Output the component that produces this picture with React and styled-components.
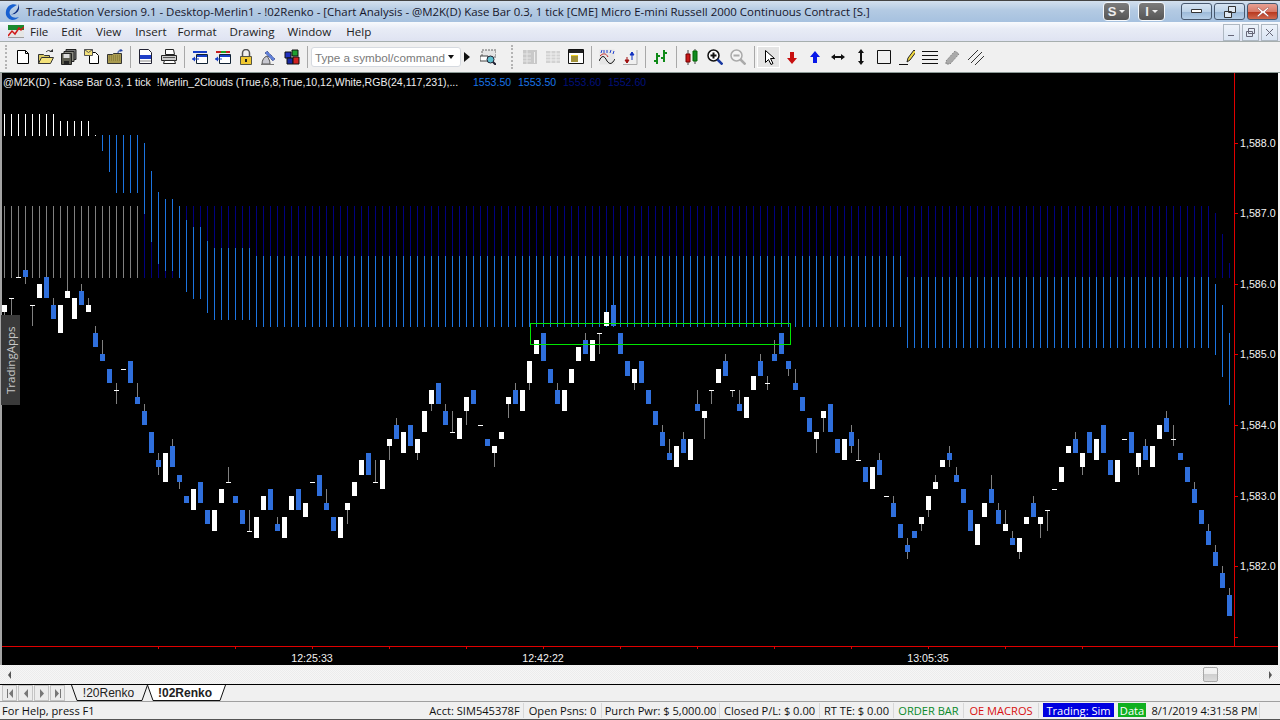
import React from "react";
import styled, { createGlobalStyle } from "styled-components";

const UI_FONT = `"Open Sans", "Noto Sans", "Liberation Sans", sans-serif`;
const CHART_FONT = `"Liberation Sans", Arial, sans-serif`;

const GlobalStyle = createGlobalStyle`
  html, body {
    margin: 0;
    padding: 0;
    overflow: hidden;
    background: #f0f0f0;
  }
`;

const Shell = styled.div`
  width: 1280px;
  height: 720px;
  display: flex;
  flex-direction: column;
  font-family: ${UI_FONT};
  color: #111;
  overflow: hidden;
`;

/* ---------- window chrome ---------- */

const TitleBar = styled.div`
  height: 22px;
  flex: none;
  display: flex;
  align-items: center;
  border-top: 1px solid #444;
  box-sizing: border-box;
  padding: 0 2px 0 4px;
  background: linear-gradient(#d3e0ee, #b3cae3 45%, #a6c1df);
`;

const TitleText = styled.div`
  margin-left: 5px;
  margin-right: auto;
  font-size: 11.45px;
  white-space: nowrap;
  color: #16162a;
`;

const AppBadge = styled.div`
  width: 27px;
  height: 19px;
  flex: none;
  margin-left: ${(p) => p.$gap}px;
  box-sizing: border-box;
  display: flex;
  align-items: center;
  justify-content: center;
  gap: 3px;
  border: 1px solid #f4f8fc;
  border-radius: 4px;
  background: linear-gradient(#7c7c7c, #555);
  color: #eee;
  font: bold 13px ${CHART_FONT};

  &::after {
    content: "";
    border-left: 3px solid transparent;
    border-right: 3px solid transparent;
    border-top: 3px solid #eee;
  }
`;

const CaptionButton = styled.div`
  width: 31px;
  height: 17px;
  flex: none;
  margin-left: ${(p) => p.$gap}px;
  box-sizing: border-box;
  display: flex;
  align-items: center;
  justify-content: center;
  border: 1px solid #47586e;
  border-radius: 3px;
  background: ${(p) =>
    p.$close
      ? "linear-gradient(#e8a093, #d87a68 50%, #b8391f 55%, #d06a50)"
      : "linear-gradient(#d6e4f2, #bcd2e8 50%, #9dbad8 55%, #b6cfe8)"};
`;

const MenuBar = styled.div`
  height: 19px;
  flex: none;
  display: flex;
  align-items: center;
  padding: 0 2px 0 8px;
  background: linear-gradient(#f8fafd, #e8ecf6 35%, #dfe3f2);
`;

const MenuItem = styled.div`
  font-size: 11.6px;
  margin-left: ${(p) => p.$gap}px;
  color: #222;
`;

const MdiButtons = styled.div`
  margin-left: auto;
  display: flex;
  gap: 2px;
  align-self: flex-end;
`;

const MdiButton = styled.div`
  width: 17px;
  height: 17px;
  box-sizing: border-box;
  display: flex;
  align-items: center;
  justify-content: center;
  border: 1px solid #aeb8c2;
  background: linear-gradient(#eef3fa, #d9e4f3);
`;

/* ---------- toolbar ---------- */

const Toolbar = styled.div`
  height: 32px;
  flex: none;
  box-sizing: border-box;
  display: flex;
  align-items: center;
  padding-left: 5px;
  background: #f0f0f0;
  border-top: 1px solid #a6aeae;
  border-bottom: 1px solid #8c9a96;
`;

const Grip = styled.div`
  width: 0;
  height: 24px;
  border-left: 2px dotted #b4b4b4;
  margin: 0 ${(p) => p.$right}px 0 ${(p) => p.$left}px;
`;

const Sep = styled.div`
  width: 1px;
  height: 22px;
  background: #a8a8a8;
  margin: 0 ${(p) => p.$right || 3}px 0 ${(p) => p.$left || 4}px;
`;

const Tool = styled.div`
  width: 23px;
  height: 22px;
  flex: none;
  box-sizing: border-box;
  display: flex;
  align-items: center;
  justify-content: center;
  border: 1px solid ${(p) => (p.$active ? "#fff" : "transparent")};
  background: ${(p) => (p.$active ? "#e4e4e4" : "transparent")};
  opacity: ${(p) => (p.$dim ? 0.55 : 1)};
`;

const SymbolBox = styled.div`
  width: 150px;
  height: 20px;
  flex: none;
  box-sizing: border-box;
  display: flex;
  align-items: center;
  justify-content: space-between;
  padding: 0 6px 0 3px;
  background: #fff;
  border: 1px solid #d6dae0;
  border-radius: 3px;
  font-family: ${CHART_FONT};
  font-size: 11.7px;
  white-space: nowrap;
  color: #7a7a7a;
`;

const DropArrow = styled.span`
  border-left: 3.5px solid transparent;
  border-right: 3.5px solid transparent;
  border-top: 4px solid #111;
`;

const PlayArrow = styled.span`
  margin: 0 6px 0 3px;
  border-top: 5px solid transparent;
  border-bottom: 5px solid transparent;
  border-left: 6px solid #111;
`;

/* ---------- chart ---------- */

const ChartPane = styled.div`
  flex: 1;
  min-height: 0;
  position: relative;
  background: #000;
  border-left: 2px solid #a4a4a4;
  border-right: 2px solid #f4f4f4;
`;

const ChartSvg = styled.svg`
  display: block;
  shape-rendering: crispEdges;

  text {
    font-family: ${CHART_FONT};
    font-size: 10.67px;
    fill: #f2f2f2;
    shape-rendering: auto;
  }
`;

const Legend = styled.div`
  position: absolute;
  left: 1px;
  top: 3px;
  font: 10.55px ${CHART_FONT};
  color: #eee;
  white-space: pre;
  display: flex;
`;

const LegendValue = styled.span`
  position: absolute;
  top: 0;
  left: ${(p) => p.$x}px;
  color: ${(p) => p.$color};
`;

const SideTab = styled.div`
  position: absolute;
  left: -1px;
  top: 242px;
  width: 19px;
  height: 90px;
  display: flex;
  align-items: center;
  justify-content: center;
  background: #3a3a3a;
  color: #c8c8c8;
  font-size: 11.5px;
  writing-mode: vertical-rl;
  transform: rotate(180deg);
`;

/* ---------- bottom strip ---------- */

const ScrollBar = styled.div`
  height: 19px;
  flex: none;
  position: relative;
  display: flex;
  align-items: center;
  justify-content: space-between;
  padding: 0 8px;
  background: repeating-conic-gradient(#ececec 0 25%, #f6f6f6 0 50%) 0 0 / 2px 2px;
`;

const ScrollThumb = styled.div`
  position: absolute;
  left: 1203px;
  top: 2px;
  width: 15px;
  height: 15px;
  box-sizing: border-box;
  border: 1px solid #a8a8a8;
  border-radius: 2px;
  background: linear-gradient(#f4f4f4, #f0f0f0 45%, #cfcfcf 50%, #dcdcdc);
`;

const ScrollArrow = styled.span`
  border-top: 4px solid transparent;
  border-bottom: 4px solid transparent;
  ${(p) => (p.$right ? "border-left: 3px solid #555;" : "border-right: 3px solid #555;")}
`;

const TabBar = styled.div`
  height: 18px;
  flex: none;
  box-sizing: border-box;
  display: flex;
  align-items: flex-start;
  padding-left: 2px;
  background: #f0f0f0;
  border-top: 1px solid #000;
  border-bottom: 1px solid #a0a0a0;
`;

const TabNav = styled.div`
  display: flex;
  gap: 1px;
  height: 16px;
  margin-right: 6px;
`;

const TabNavButton = styled.div`
  width: 15px;
  box-sizing: border-box;
  display: flex;
  align-items: center;
  justify-content: center;
  border: 1px solid #c4c4c4;
  background: #ececec;
`;

const Tab = styled.div`
  position: relative;
  width: ${(p) => p.$w}px;
  margin-right: -1px;
  height: 16px;
  display: flex;
  align-items: center;
  justify-content: center;
  font-family: ${CHART_FONT};
  font-size: 12px;
  font-weight: ${(p) => (p.$active ? 700 : 400)};
  color: #222;
`;

const TabOutline = styled.svg`
  position: absolute;
  left: 0;
  top: 0;
`;

const TabLabel = styled.span`
  position: relative;
  margin-right: ${(p) => p.$shift}px;
`;

const StatusBar = styled.div`
  height: 18px;
  flex: none;
  display: flex;
  align-items: center;
  box-sizing: border-box;
  padding: 0 20px 1px 2px;
  font-size: 11.1px;
  background: #f0f0f0;
  border-bottom: 1px solid #555;
`;

const StatusHelp = styled.div`
  margin-right: auto;
`;

const StatusCell = styled.div`
  width: ${(p) => p.$w}px;
  height: 15px;
  flex: none;
  box-sizing: border-box;
  display: flex;
  align-items: center;
  justify-content: center;
  white-space: nowrap;
  border-right: 1px solid #d8d8d8;
  color: ${(p) => p.$color || "#111"};
`;

const StatusFlag = styled.div`
  width: ${(p) => p.$w}px;
  height: 14px;
  flex: none;
  margin: 0 4px 0 ${(p) => p.$ml || 0}px;
  display: flex;
  align-items: center;
  justify-content: center;
  white-space: nowrap;
  color: #fff;
  background: ${(p) => p.$bg};
`;

/* ---------- chart data, y values copied per section with an offset ---------- */

const at = (base, rows) =>
  rows.map(([kind, top, bottom, wickTop, wickBottom]) => ({
    kind,
    top: Math.round(base + top / 3),
    bottom: Math.round(base + bottom / 3),
    wickTop: wickTop === undefined ? null : Math.round(base + wickTop / 3),
    wickBottom: wickBottom === undefined ? null : Math.round(base + wickBottom / 3),
  }));

const BARS = [
  ...at(270, [
    ["w",105,126,126,165],["d",85,85,85,150],["d",22,22],["b",0,21,0,42],["d",106,106,106,168],
    ["w",42,84],["b",21,84],["b",105,147,84,105],["w",105,189],["w",63,84,0,63],
    ["w",84,147],["b",63,105,42,63],["w",105,126,84,105],["b",189,231,168,189],["b",252,273,210,252],
    ["b",297,339],["d",361,361,339,402],["d",298,298],["b",273,339],["b",381,402,339,381],
    ["b",423,465,402,423],["b",486,549],["b",570,591,549,615],["w",549,636],["b",528,591,507,528],
    ["b",615,636,636,657],["b",678,699],["w",657,720],["b",636,699],["b",720,762],
    ["w",720,783],["w",657,699],["d",637,637,591,637],["b",678,699],["b",720,762],
    ["d",784,784,720,784],["w",741,804],["w",678,720],["b",657,720],["b",762,783,741,762],
    ["w",741,804],["w",678,720],["b",657,720],["w",699,741],["d",637,637],
  ]),
  ...at(370, [
    ["b",315,378],["b",399,420,357,399],["b",441,483],["w",441,504],["w",399,420,420,462],
    ["w",336,378],["w",270,315],["b",249,315],["d",337,337,270,337],["w",270,357],
    ["w",207,228,228,270],["b",165,207,144,165],["w",186,249],["b",165,228],["w",207,249,249,270],
    ["w",123,186],["w",60,102,102,123],["b",39,102],["b",123,165,102,123],["d",187,187,123,187],
    ["w",144,207],["w",81,123,123,165],["b",60,102],["d",166,166],["b",207,228],
    ["w",228,249,249,291],["w",186,207],["w",81,102,102,144],["b",60,102,39,60],["w",60,123],
  ]),
  ...at(290, [
    ["w",213,279,279,300],["w",150,192],["b",129,213],["b",237,279],["b",300,342,279,300],
    ["w",300,363],["w",237,279],["w",171,213],["b",150,192,129,150],["w",150,213],
    ["d",130,130,130,192],["w",66,108],["b",45,108],["b",129,192],["b",213,258],
    ["w",237,279,279,300],["b",213,279],["b",300,342],
  ]),
  ...at(340, [
    ["b",213,255],["b",276,318,255,276],["b",339,360,297,339],["w",318,381],["b",297,339,276,297],
    ["w",297,360],["b",192,213,150,192],["w",213,234,234,297],["d",151,151,151,192],["w",87,129],
    ["b",63,108,42,63],["d",151,151,151,171],["b",192,213,150,192],["w",171,234],["w",108,150],
    ["b",63,108,42,63],["d",130,130,108,150],["b",42,63,0,42],["b",-21,42],["b",63,87,87,108],
    ["b",129,150,87,129],["b",171,213],["b",234,276],["w",276,297,297,339],["w",213,234,234,276],
    ["b",192,276],["b",297,339],["w",297,360],["b",276,318,255,339],["d",361,361,297,361],
    ["b",381,426],["w",381,447],["b",360,405,339,360],["d",469,469],["b",489,531,468,489],
    ["b",552,594],["b",615,636,594,657],["b",573,594],["w",531,552,552,573],["w",468,510,510,531],
    ["w",426,447,405,426],["w",360,381],["b",339,360,318,381],["b",405,426,381,405],
  ]),
  ...at(400, [
    ["b",267,309],["b",330,393],["w",372,435],["w",309,351],["b",267,309,225,267],
    ["b",330,372,309,330],["w",372,393,330,372],["b",414,435,393,414],["w",414,456,456,477],["w",351,372],
    ["b",309,351,288,309],["w",351,372,372,414],["d",331,331,331,393],["d",268,268],["w",201,246],
    ["w",138,159],["b",117,159,96,117],["w",159,201,201,225],["b",96,159],["w",117,180],
    ["b",75,159],["b",180,225],["w",180,246],["d",118,118],["b",96,159],
    ["w",159,201,201,225],["b",138,180,117,138],["w",138,201],["w",75,117],["b",54,96,33,54],
    ["d",118,118,75,138],["b",159,180],["b",201,246],["b",267,309,246,267],["b",330,372],
    ["b",393,435,372,393],["b",456,498,435,456],["b",519,564,498,519],["b",585,648,564,585],
  ]),
];

const WHITE = "#fff";
const BLUE = "#1c74e0";
const NAVY = "#000080";
const GRAY = "#808080";

// [first bar, last bar, colour, y from, y to]
const CLOUD = [
  [0, 7, WHITE, 114, 136], [8, 12, WHITE, 121, 136], [13, 13, WHITE, 135, 136],
  [0, 19, GRAY, 206, 278],
  [14, 14, BLUE, 135, 151], [15, 15, BLUE, 135, 172], [16, 19, BLUE, 135, 193],
  [20, 20, BLUE, 143, 214], [21, 21, BLUE, 171, 242], [22, 22, BLUE, 192, 264],
  [23, 24, BLUE, 199, 271], [25, 25, BLUE, 206, 278], [26, 26, BLUE, 220, 292],
  [27, 28, BLUE, 227, 299], [29, 29, BLUE, 241, 313], [30, 35, BLUE, 248, 320],
  [36, 128, BLUE, 256, 327], [129, 172, BLUE, 277, 348], [173, 173, BLUE, 284, 355],
  [174, 174, BLUE, 305, 377], [175, 175, BLUE, 333, 405],
  [20, 20, NAVY, 214, 278], [21, 21, NAVY, 242, 278], [22, 22, NAVY, 264, 278],
  [23, 24, NAVY, 271, 278], [26, 26, NAVY, 206, 220], [27, 28, NAVY, 206, 227],
  [29, 29, NAVY, 206, 241], [30, 35, NAVY, 206, 248], [36, 128, NAVY, 206, 256],
  [129, 172, NAVY, 206, 277], [173, 173, NAVY, 213, 278], [174, 174, NAVY, 234, 278],
  [175, 175, NAVY, 263, 278],
];

const PRICE_LABELS = [
  ["1,588.0", 143], ["1,587.0", 213], ["1,586.0", 284], ["1,585.0", 354],
  ["1,584.0", 425], ["1,583.0", 496], ["1,582.0", 566],
];
const PRICE_TICKS = [143, 213, 284, 354, 425, 496, 566, 637];
const TIME_TICKS = [158, 235, 312, 389, 466, 543, 620, 697, 774, 851, 928, 1005, 1082];
const TIME_LABELS = [["12:25:33", 312], ["12:42:22", 543], ["13:05:35", 928]];

const RED = "#e00000";
const CANDLE_BLUE = "#2f6fdc";

function cloudLines() {
  const out = [];
  CLOUD.forEach(([from, to, color, y1, y2]) => {
    for (let i = from; i <= to; i++) {
      out.push(<rect key={`${i}-${color}-${y1}`} x={4 + 7 * i} y={y1} width="1" height={y2 - y1} fill={color} />);
    }
  });
  return out;
}

function Candle({ bar, i }) {
  const x = 2 + 7 * i;
  return (
    <g>
      {bar.wickTop !== null && (
        <rect x={x + 2} y={bar.wickTop} width="1" height={bar.wickBottom - bar.wickTop} fill={GRAY} />
      )}
      {bar.kind === "d" ? (
        <rect x={x} y={bar.top} width="5" height="1" fill="#fff" />
      ) : (
        <rect
          x={x}
          y={bar.top}
          width="5"
          height={bar.bottom - bar.top}
          fill={bar.kind === "w" ? "#fff" : CANDLE_BLUE}
        />
      )}
    </g>
  );
}

function Chart() {
  return (
    <ChartSvg width="1276" height="592" viewBox="2 73 1276 592">
      {cloudLines()}
      {BARS.map((bar, i) => (
        <Candle key={i} bar={bar} i={i} />
      ))}
      <rect x="530.5" y="323.5" width="260" height="21" fill="none" stroke="#00e600" />
      <rect x="1234" y="73" width="1" height="574" fill={RED} />
      <rect x="2" y="646" width="1276" height="1" fill={RED} />
      {PRICE_TICKS.map((y) => (
        <rect key={y} x="1235" y={y} width="3" height="1" fill={RED} />
      ))}
      {TIME_TICKS.map((x) => (
        <rect key={x} x={x} y="647" width="1" height="2" fill={RED} />
      ))}
      {PRICE_LABELS.map(([label, y]) => (
        <text key={label} x="1240" y={y + 4}>{label}</text>
      ))}
      {TIME_LABELS.map(([label, x]) => (
        <text key={label} x={x} y="662" textAnchor="middle">{label}</text>
      ))}
    </ChartSvg>
  );
}

/* ---------- icons ---------- */

const ICONS = {
  newDoc: (
    <>
      <path d="M2.5 1.5h8l3 3v10h-11z" fill="#fff" stroke="#000" />
      <path d="M10.5 1.5v3h3" fill="none" stroke="#000" />
    </>
  ),
  open: (
    <>
      <path d="M.5 14.5v-9h5l1 1h5v8z" fill="#d8c860" stroke="#333" />
      <path d="M.5 14.5l3-6h12l-3 6z" fill="#f4e27a" stroke="#333" />
      <path d="M8 3c2-2 4-2 5 0" fill="none" stroke="#333" />
      <path d="M11 3h4V0z" fill="#333" />
    </>
  ),
  saveAll: (
    <>
      <path d="M5 .5h10v10H5z" fill="#777" stroke="#222" />
      <path d="M3 2.5h10v10H3z" fill="#8a8a80" stroke="#222" />
      <path d="M.5 4.5h10v11H.5z" fill="#5c5c50" stroke="#222" />
      <path d="M2.5 5h6v4h-6z" fill="#ddd" />
      <path d="M3 12h5v3H3z" fill="#222" />
    </>
  ),
  docMail: (
    <>
      <path d="M5.5 3.5h6l3 3v8h-9z" fill="#fff" stroke="#000" />
      <path d="M.5 .5h8v6h-8z" fill="#f4e27a" stroke="#555" />
      <path d="M.5 .5l4 3 4-3" fill="none" stroke="#555" />
    </>
  ),
  folder: (
    <>
      <path d="M.5 14.5v-9h5l1-1h8v10z" fill="#a89a50" stroke="#333" />
      <path d="M2 7h12M2 9h12M2 11h12" stroke="#7a6e30" strokeDasharray="1 1" />
      <path d="M11 4c0-2 1-3 3-3" fill="none" stroke="#2040a0" />
      <path d="M12 3l2-3 2 2z" fill="#2040a0" />
    </>
  ),
  preview: (
    <>
      <path d="M1.5 .5h9l3 3v11h-12z" fill="#fff" stroke="#223" />
      <path d="M2 6h11v4H2z" fill="#2040c8" />
      <path d="M2 12h11" stroke="#888" />
    </>
  ),
  print: (
    <>
      <path d="M4.5 .5h8l1 5h-9z" fill="#fff" stroke="#222" />
      <path d="M.5 6.5h15v5h-15z" fill="#ccc" stroke="#222" />
      <path d="M3.5 11.5h10l1 3h-12z" fill="#fff" stroke="#222" />
      <path d="M2 8.5h12" stroke="#555" />
    </>
  ),
  winBlue: (
    <>
      <path d="M1 2h14v2H1z" fill="#1840c8" />
      <path d="M4.5 5.5h11v9h-11z" fill="#fff" stroke="#123" />
      <path d="M5 6h10v2H5z" fill="#1840c8" />
      <path d="M0 10h7" stroke="#1840c8" />
      <path d="M0 10l3-2.500v5z" fill="#1840c8" />
    </>
  ),
  winRed: (
    <>
      <path d="M1 2h5v2H1z" fill="#c82020" />
      <path d="M6 2h5v2H6z" fill="#20a020" />
      <path d="M11 2h4v2h-4z" fill="#c82020" />
      <path d="M4.500 5.500h11v9h-11z" fill="#fff" stroke="#123" />
      <path d="M5 6h10v2H5z" fill="#1840c8" />
      <path d="M0 10h7" stroke="#1840c8" />
      <path d="M0 10l3-2.500v5z" fill="#1840c8" />
    </>
  ),
  lock: (
    <>
      <path d="M4.500 7V4a3.500 3.500 0 0 1 7 0v3" fill="none" stroke="#555" strokeWidth="1.500" />
      <path d="M2.500 7.500h11v8h-11z" fill="#f0c830" stroke="#554" />
      <path d="M7 10h2v3H7z" fill="#222" />
    </>
  ),
  dish: (
    <>
      <path d="M6 2l8 8-2 2-8-8z" fill="#6080d8" stroke="#304080" strokeDasharray="1 1" />
      <path d="M1 15c0-4 2-7 5-8 2 3 3 5 3 8z" fill="#c8c8d0" stroke="#555" />
      <path d="M0 15.500h13" stroke="#777" />
    </>
  ),
  cubes: (
    <>
      <path d="M1 3h6v6H1z" fill="#2030c0" stroke="#111" />
      <path d="M8 1h6v6H8z" fill="#20a030" stroke="#111" />
      <path d="M3 9h6v6H3z" fill="#1828a0" stroke="#111" />
      <path d="M9 8h6v7H9z" fill="#d02020" stroke="#111" />
    </>
  ),
  chartFind: (
    <>
      <path d="M2 1h14v7H2z" fill="#e4e4e4" stroke="#666" strokeDasharray="2 1" />
      <path d="M0 7h8v5H0z" fill="#fff" stroke="#444" />
      <circle cx="10.500" cy="10.500" r="3.500" fill="#60c0d0" stroke="#223" />
      <path d="M13 13l3 3" stroke="#223" strokeWidth="2" />
    </>
  ),
  gridDollar: (
    <>
      <path d="M1 1h14v14H1z" fill="#aaa" />
      <path d="M1 5h8M1 9h8M1 12h8M5 1v14" stroke="#ddd" />
      <path d="M12.500 3v11" stroke="#eee" />
    </>
  ),
  gridGray: (
    <>
      <path d="M1 2h14v12H1z" fill="#bbb" />
      <path d="M1 5h14M1 8h14M1 11h14M6 2v12M11 2v12" stroke="#eee" />
    </>
  ),
  calendar: (
    <>
      <path d="M.500 .500h15v14h-15z" fill="#fff" stroke="#111" />
      <path d="M1 1h14v3H1z" fill="#222" />
      <path d="M3 6h7v7H3z" fill="#f0d020" />
      <path d="M3 8h7M3 10h7M3 12h7" stroke="#555" />
    </>
  ),
  studies: (
    <>
      <path d="M.500 .500h15v15h-15z" fill="#e6e6e6" />
      <path d="M2 4l1-3M5 4V1M8 4V1M11 4l1-3M14 5l1-3" stroke="#2040d0" />
      <path d="M0 12c3-6 5-6 8 0 3 4 5 3 8-2" fill="none" stroke="#111" />
      <path d="M1 7c3-3 6-3 8 1" fill="none" stroke="#c02020" />
    </>
  ),
  updown: (
    <>
      <path d="M1 15.500h14V1" fill="none" stroke="#aaa" />
      <path d="M5 14V8M3 11l2 3 2-3z" stroke="#a01010" fill="#a01010" />
      <path d="M10 11V3M8 6l2-3 2 3z" stroke="#1030c0" fill="#1030c0" />
    </>
  ),
  greenBars: (
    <>
      <path d="M4 4v11M1 12h3M4 7h3" stroke="#0f8a18" strokeWidth="2" fill="none" />
      <path d="M11 1v12M8 9h3M11 4h3" stroke="#0f8a18" strokeWidth="2" fill="none" />
    </>
  ),
  candles: (
    <>
      <path d="M4 1v15" stroke="#444" />
      <path d="M2 5h4v8H2z" fill="#c81818" stroke="#700" />
      <path d="M11 0v15" stroke="#444" />
      <path d="M9 2h4v10H9z" fill="#108a20" stroke="#060" />
    </>
  ),
  zoomIn: (
    <>
      <circle cx="6.500" cy="6.500" r="5.500" fill="#fff" stroke="#111" strokeWidth="1.500" />
      <path d="M3.500 6.500h6M6.500 3.500v6" stroke="#111" strokeWidth="2" />
      <path d="M10.500 10.500l5 5" stroke="#1838a0" strokeWidth="2.500" />
    </>
  ),
  zoomOut: (
    <>
      <circle cx="6.500" cy="6.500" r="5.500" fill="#f4f4f4" stroke="#aaa" strokeWidth="1.500" />
      <path d="M3.500 6.500h6" stroke="#aaa" strokeWidth="2" />
      <path d="M10.500 10.500l5 5" stroke="#aaa" strokeWidth="2.500" />
    </>
  ),
  pointer: <path d="M4.500 1.500v12l3-3 2.500 5 2-1-2.500-5h4z" fill="#fff" stroke="#000" />,
  arrowDown: <path d="M6 3h4v6h3l-5 6-5-6h3z" fill="#c81010" />,
  arrowUp: <path d="M6 14h4V8h3L8 2 3 8h3z" fill="#0818e8" />,
  arrowH: <path d="M1 8l4-3v2h6V5l4 3-4 3V9H5v2z" fill="#111" />,
  arrowV: <path d="M8 0l3 4H9v8h2l-3 4-3-4h2V4H5z" fill="#111" />,
  square: <path d="M1.500 1.500h13v13h-13z" fill="none" stroke="#111" />,
  pen: (
    <>
      <path d="M0 15.500h9" stroke="#111" />
      <path d="M8 13l1-4 6-8 2 2-6 8z" fill="#f0d840" stroke="#222" />
    </>
  ),
  lines: <path d="M0 2.500h16M0 6.500h16M0 10.500h16M0 14.500h16" stroke="#111" />,
  pencil: <path d="M1 12l9-10 4 3-9 10-4 0z" fill="#aaa" stroke="#888" strokeDasharray="2 1" />,
  parallel: <path d="M0 11L10 1M3 14L14 3M7 16L16 7" stroke="#333" fill="none" />,
};

const Icon = ({ name }) => (
  <svg width="16" height="16" viewBox="0 0 16 16">{ICONS[name]}</svg>
);

const tools = (names) =>
  names.map((name) => (
    <Tool key={name}>
      <Icon name={name} />
    </Tool>
  ));

const AppLogo = () => (
  <svg width="17" height="18" viewBox="0 0 17 18">
    <path d="M13 2C8 0 3 3 2 8c-1 5 2 8 6 9 3 0 5-1 7-3-3 1-6 1-8-1-2-2-2-5 0-7 2-2 4-3 6-4z" fill="#1760d0" />
    <path d="M14 1c1 3-1 7-4 9-1 1-2 1-3 1 3 1 7-1 8-5 0-2 0-4-1-5z" fill="#0b2c80" />
  </svg>
);

const MenuLogo = () => (
  <svg width="16" height="13" viewBox="0 0 16 13">
    <path d="M0 0h16v5H0z" fill="#1c8a30" />
    <path d="M0 5h16v8H0z" fill="#e6e6e6" />
    <path d="M0 11l4-5 3 3 4-6 2 2 3-3" fill="none" stroke="#d01818" strokeWidth="1.500" />
    <path d="M0 13h16" stroke="#555" />
  </svg>
);

const Min = () => (
  <svg width="11" height="5" viewBox="0 0 11 5"><path d="M.5.5h10v3H.5z" fill="#fff" stroke="#333" /></svg>
);
const Restore = () => (
  <svg width="12" height="12" viewBox="0 0 12 12">
    <path d="M4.500 .500h7v6h-7zM.500 5.500h7v6h-7z" fill="#dfe8f2" stroke="#333" />
  </svg>
);
const Close = () => (
  <svg width="12" height="10" viewBox="0 0 12 10">
    <path d="M1 0l5 4 5-4 1 1-4 4 4 4-1 1-5-4-5 4-1-1 4-4-4-4z" fill="#fff" stroke="#844" strokeWidth=".500" />
  </svg>
);
const MdiGlyph = ({ d, fill }) => (
  <svg width="11" height="11" viewBox="0 0 11 11"><path d={d} fill={fill || "none"} stroke="#667" /></svg>
);

const NavGlyph = ({ d }) => (
  <svg width="8" height="9" viewBox="0 0 8 9"><path d={d} fill="#777" /></svg>
);

const TabShape = ({ w, active }) => (
  <TabOutline width={w} height="16" viewBox={`0 0 ${w} 16`}>
    <path
      d={`M.5 0L6 15.500H${w - 6}L${w - 0.5} 0`}
      fill={active ? "#fff" : "#f0f0f0"}
      stroke="#111"
    />
  </TabOutline>
);

const MENU = [
  ["File", 6], ["Edit", 13], ["View", 14], ["Insert", 14],
  ["Format", 11], ["Drawing", 13], ["Window", 13], ["Help", 15],
];

export default function App() {
  return (
    <Shell>
      <GlobalStyle />
      <TitleBar>
        <AppLogo />
        <TitleText>
          TradeStation Version 9.1 - Desktop-Merlin1 - !02Renko - [Chart Analysis - @M2K(D) Kase Bar 0.3, 1 tick [CME] Micro E-mini Russell 2000 Continuous Contract [S.]
        </TitleText>
        <AppBadge $gap={0}>S</AppBadge>
        <AppBadge $gap={8}>I</AppBadge>
        <CaptionButton $gap={16}><Min /></CaptionButton>
        <CaptionButton $gap={2}><Restore /></CaptionButton>
        <CaptionButton $gap={2} $close><Close /></CaptionButton>
      </TitleBar>

      <MenuBar>
        <MenuLogo />
        {MENU.map(([label, gap]) => (
          <MenuItem key={label} $gap={gap}>{label}</MenuItem>
        ))}
        <MdiButtons>
          <MdiButton><MdiGlyph d="M2 8.500h6" /></MdiButton>
          <MdiButton><MdiGlyph d="M3.500 1.500h6v5h-6zM1.500 4.500h6v5h-6z" /></MdiButton>
          <MdiButton><MdiGlyph d="M2 2l7 7M9 2l-7 7" /></MdiButton>
        </MdiButtons>
      </MenuBar>

      <Toolbar>
        <Grip $left={0} $right={4} />
        {tools(["newDoc", "open", "saveAll", "docMail", "folder"])}
        <Sep />
        {tools(["preview", "print"])}
        <Sep />
        {tools(["winBlue", "winRed", "lock", "dish", "cubes"])}
        <Sep />
        <SymbolBox>
          Type a symbol/command
          <DropArrow />
        </SymbolBox>
        <PlayArrow />
        <Tool><Icon name="chartFind" /></Tool>
        <Grip $left={12} $right={5} />
        <Tool $dim><Icon name="gridDollar" /></Tool>
        <Tool $dim><Icon name="gridGray" /></Tool>
        <Tool><Icon name="calendar" /></Tool>
        <Sep />
        {tools(["studies", "updown"])}
        <Sep />
        {tools(["greenBars"])}
        <Sep />
        {tools(["candles", "zoomIn", "zoomOut"])}
        <Sep $left={5} $right={2} />
        <Tool $active><Icon name="pointer" /></Tool>
        {tools(["arrowDown", "arrowUp", "arrowH", "arrowV", "square", "pen", "lines", "pencil", "parallel"])}
      </Toolbar>

      <ChartPane>
        <Chart />
        <Legend>
          @M2K(D) - Kase Bar 0.3, 1 tick  !Merlin_2Clouds (True,6,8,True,10,12,White,RGB(24,117,231),...
          <LegendValue $x={470} $color="#1875e7">1553.50</LegendValue>
          <LegendValue $x={515} $color="#1875e7">1553.50</LegendValue>
          <LegendValue $x={560} $color="#00107a">1553.60</LegendValue>
          <LegendValue $x={605} $color="#00107a">1552.60</LegendValue>
        </Legend>
        <SideTab>TradingApps</SideTab>
      </ChartPane>

      <ScrollBar>
        <ScrollArrow />
        <ScrollThumb />
        <ScrollArrow $right />
      </ScrollBar>

      <TabBar>
        <TabNav>
          <TabNavButton><NavGlyph d="M1 0h1v9H1zM7 0v9L3 4.500z" /></TabNavButton>
          <TabNavButton><NavGlyph d="M6 0v9L2 4.500z" /></TabNavButton>
          <TabNavButton><NavGlyph d="M2 0v9l4-4.500z" /></TabNavButton>
          <TabNavButton><NavGlyph d="M1 0v9l4-4.500zM6 0h1v9H6z" /></TabNavButton>
        </TabNav>
        <Tab $w={77}>
          <TabShape w={77} />
          <TabLabel $shift={2}>!20Renko</TabLabel>
        </Tab>
        <Tab $w={79} $active>
          <TabShape w={79} active />
          <TabLabel $shift={3}>!02Renko</TabLabel>
        </Tab>
      </TabBar>

      <StatusBar>
        <StatusHelp>For Help, press F1</StatusHelp>
        <StatusCell $w={98}>Acct: SIM545378F</StatusCell>
        <StatusCell $w={78}>Open Psns: 0</StatusCell>
        <StatusCell $w={118}>Purch Pwr: $ 5,000.00</StatusCell>
        <StatusCell $w={100}>Closed P/L: $ 0.00</StatusCell>
        <StatusCell $w={74}>RT TE: $ 0.00</StatusCell>
        <StatusCell $w={70} $color="#0a8a2a">ORDER BAR</StatusCell>
        <StatusCell $w={75} $color="#d81010">OE MACROS</StatusCell>
        <StatusFlag $w={71} $ml={4} $bg="#0000e0">Trading: Sim</StatusFlag>
        <StatusFlag $w={28} $bg="#10b020">Data</StatusFlag>
        <StatusCell $w={110}>8/1/2019 4:31:58 PM</StatusCell>
      </StatusBar>
    </Shell>
  );
}
